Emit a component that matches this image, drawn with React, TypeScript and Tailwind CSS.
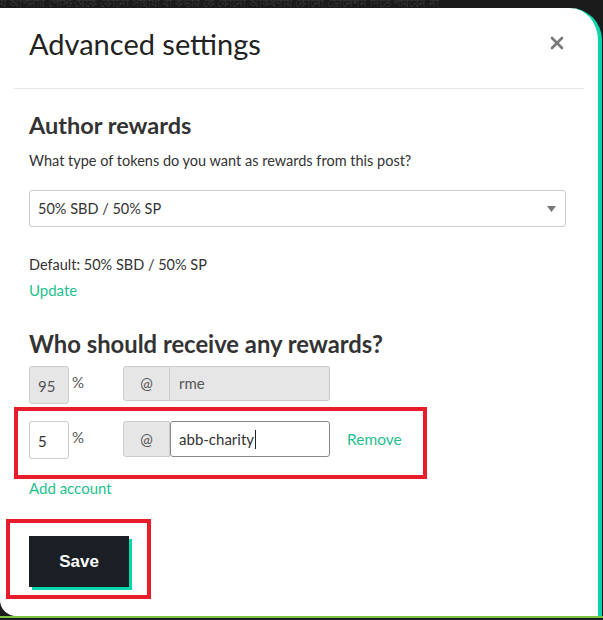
import React from 'react';

const font = { fontFamily: 'Lato, "Noto Sans", sans-serif' };

const App: React.FC = () => {
  return (
    <div className="relative w-[603px] h-[620px] overflow-hidden bg-[#1b1b1b]" style={font}>
      {/* page behind the modal */}
      <div className="h-[8px] overflow-hidden whitespace-nowrap text-[11px] leading-[6px] text-[#3a3a3a]">
        য় আপনার পোস্ট থেকে কোনো সাহায্য বা কভার কে কোনো আকর্ষণীয় কোনো ডোনেশন দিতে পারবেন না
      </div>

      <div className="w-[602px] h-[608px] bg-white rounded-tr-[32px] rounded-bl-[16px] border-r-4 border-[#06d6a9] px-[14px]">
        <div className="flex items-start justify-between pl-[15px] pr-[20px] pt-[17px] pb-[25px] border-b border-[#e8e8e8]">
          <h1 className="text-[29px] leading-[38px] font-normal text-[#222]">Advanced settings</h1>
          <button className="mt-[11px] flex text-[#777]">
            <svg width="14" height="14" viewBox="0 0 14 14">
              <path d="M2 2 L12 12 M12 2 L2 12" stroke="#777" strokeWidth="2.6" strokeLinecap="round" />
            </svg>
          </button>
        </div>

        <div className="px-[15px] pt-[21px]">
          <h2 className="text-[23.5px] leading-[30px] font-bold text-[#333]">Author rewards</h2>
          <p className="mt-[11px] text-[14.5px] leading-[20px] text-[#333]">
            What type of tokens do you want as rewards from this post?
          </p>
          <div className="mt-[19px] flex h-[37px] w-[537px] items-center justify-between rounded-[3px] border border-[#ccc] px-[8px] text-[14.5px] text-[#333]">
            <span>50% SBD / 50% SP</span>
            <svg width="9" height="6" viewBox="0 0 9 6" className="mr-[1px]">
              <path d="M0 0 H9 L4.5 6 Z" fill="#777" />
            </svg>
          </div>
          <p className="mt-[28px] text-[14.5px] leading-[20px] text-[#333]">Default: 50% SBD / 50% SP</p>
          <a className="mt-[5px] block text-[15px] leading-[20px] text-[#1fbf8f]">Update</a>

          <h2 className="mt-[29px] text-[23.8px] leading-[30px] font-bold text-[#333]">
            Who should receive any rewards?
          </h2>

          <div className="mt-[7px] flex items-start">
            <div className="flex h-[38px] w-[40px] items-center rounded-[3px] border border-[#ccc] bg-[#e6e6e6] pl-[8px] pt-[3px] text-[15px] text-[#555]">
              95
            </div>
            <span className="ml-[3px] mt-[5px] text-[15px] text-[#555]">%</span>
            <div className="ml-[39px] flex h-[35px]">
              <div className="flex w-[47px] items-center justify-center rounded-l-[3px] border border-[#ccc] bg-[#e6e6e6] text-[15px] text-[#555]">
                @
              </div>
              <div className="flex w-[160px] items-center rounded-r-[3px] border border-l-0 border-[#ccc] bg-[#e6e6e6] pl-[9px] text-[15px] text-[#555]">
                rme
              </div>
            </div>
          </div>

          <div className="mt-[17px] flex items-start">
            <div className="flex h-[38px] w-[40px] items-center rounded-[3px] border border-[#ccc] bg-white pl-[8px] pt-[3px] text-[15px] text-[#333]">
              5
            </div>
            <span className="ml-[3px] mt-[5px] text-[15px] text-[#555]">%</span>
            <div className="ml-[39px] flex h-[36px]">
              <div className="flex w-[47px] items-center justify-center rounded-l-[3px] border border-[#ccc] bg-[#e6e6e6] text-[15px] text-[#555]">
                @
              </div>
              <div className="flex w-[160px] items-center rounded-[3px] border border-[#888] bg-white pl-[8px] text-[15px] text-[#333]">
                abb-charity<span className="ml-[1px] h-[19px] w-px bg-[#222]" />
              </div>
            </div>
            <a className="ml-[17px] mt-[7px] text-[15.5px] text-[#1fbf8f]">Remove</a>
          </div>

          <a className="mt-[19px] block text-[15px] leading-[20px] text-[#1fbf8f]">Add account</a>

          <button
            className="mt-[38px] h-[51px] w-[100px] bg-[#1a1f26] text-[17px] font-bold text-white shadow-[3px_3px_0_#06d6a9]"
            style={{ fontFamily: '"Liberation Sans", Arial, sans-serif' }}
          >
            Save
          </button>
        </div>
      </div>
      <div className="h-[2px] bg-[#7cc243]" />

      {/* red annotation frames */}
      <div className="absolute left-[14px] top-[407px] h-[72px] w-[413px] border-4 border-[#e81c2a]" />
      <div className="absolute left-[6px] top-[519px] h-[80px] w-[145px] border-4 border-[#e81c2a]" />
    </div>
  );
};

export default App;
